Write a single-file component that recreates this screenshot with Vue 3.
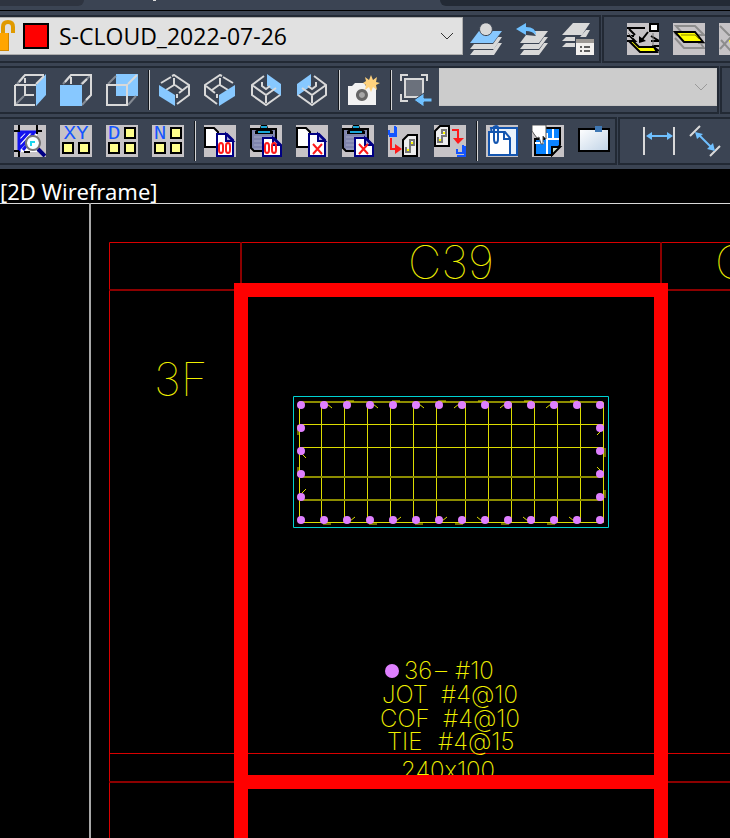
<script setup>
import { ref } from 'vue'

const layer = ref('S-CLOUD_2022-07-26')
const view = ref('')

const L = '#d9d9d9'
const B = '#87c8ff'
const D = '#858b94'
const K = '#000'
const W = '#fff'
const N = '#000084'
const R = '#ff1a1a'
const Y = '#ffff00'

// Shape helpers: filled outline and open stroke
const f = (d, fill, stroke = 'none', w = 1) => ({ d, fill, stroke, w })
const s = (d, stroke = L, w = 2) => ({ d, fill: 'none', stroke, w })

const tile = f('M0 0H32V32H0Z', '#c6c3c6')
const lowerLayers = [
  f('M28 14H32L24 26H0L4 21H23Z', L),
  f('M28 20H32L24 32H0L4 27H23Z', L)
]
const backPage = f('M1 3H10L14 7V22H1Z', W, K, 2)
const frontPage = [f('M13 9H23L29 15V31H13Z', W, N, 2), f('M22 9V16H29Z', '#a9a9d8', N, 2)]
const clipPage = [f('M13 13H24L31 20V31H13Z', W, N, 2), f('M23 13V20H30Z', '#a9a9d8', N, 2)]
const board = [
  f('M1 4H26V26H4L1 23Z', '#7f84ad', K, 2),
  s('M4 8H24M4 12H24M4 16H24M4 20H12M4 24H12', '#a3a7c6', 1),
  f('M5 6L10 3L11 0H17L18 3L23 6V9H5Z', K),
  f('M11 1H17V3H11ZM8 6H20V8H8Z', '#18a5d6')
]
const zeros = (x, y) => s(`M${x} ${y + 3}Q${x} ${y} ${x + 2} ${y}T${x + 4} ${y + 3}V${y + 7}Q${x + 4} ${y + 10} ${x + 2} ${y + 10}T${x} ${y + 7}ZM${x + 7} ${y + 3}Q${x + 7} ${y} ${x + 9} ${y}T${x + 11} ${y + 3}V${y + 7}Q${x + 11} ${y + 10} ${x + 9} ${y + 10}T${x + 7} ${y + 7}Z`, R)
const cross = (x, y) => s(`M${x} ${y}L${x + 9} ${y + 10}M${x + 9} ${y}L${x} ${y + 10}`, R)
const box = (x, y) => f(`M${x} ${y}H${x + 10}V${y + 10}H${x}Z`, '#ffff8c', K, 2)

const layerTools = [
  { name: 'Make object layer current', shapes: [f('M9 8H32L23 20H0Z', B), ...lowerLayers, f('M16 -.2A6.4 6.4 0 1 1 15.9 -.2Z', L, '#3b4453', 1)] },
  { name: 'Layer previous', shapes: [f('M16 8H32L23 20H4L10 12L20 13Z', L), f('M28 14H32L23 26H4L8 21H23Z', L), f('M28 20H32L23 32H4L8 27H23Z', L), f('M0 6L10 0V4Q20 4 20 12Q16 8 10 8V12Z', '#6fc0ff')] },
  { name: 'Layer states', shapes: [f('M11 0H28L20 12H0Z', L), f('M24 7H28L24 14H18ZM4 14H13V18H0ZM4 20H13V24H0Z', L), f('M14 16H32V32H14Z', '#f2f0ee'), f('M14 16H32V20H14Z', '#9c9894'), s('M18 24H20M22 24H28M18 28H20M22 28H28', '#5e5e5e')] }
]

const layerWalk = [
  { name: 'Layer match', shapes: [tile, s('M0 5H18M2 6L8 12M0 13H7M2 12L8 18H0M24 13L32 18M24 18H32M25 23H32M25 23L32 28', K), s('M1 10L6 15M26 10V29', '#777', 1), f('M2 18H6L12 24H27L30 29H13Z', Y, K, 2), s('M21 9L14 18', K), f('M12 20V13L19 18Z', K), f('M23 1H31V8H23Z', W, K, 2)] },
  { name: 'Change to current layer', shapes: [tile, s('M3 3H22L31 12H11ZM2 15L11 25H31L28 21', '#8d8d8d'), s('M1 9L4 13M25 20H32', '#8d8d8d'), f('M2 9H22L30 19H11Z', Y, K, 2), s('M8 12H22L26 16', '#8a8600', 1)] },
  { name: 'Copy to layer', shapes: [tile, s('M1 3L10 12H31M1 26L12 14M2 17L12 28H31', '#8d8d8d'), f('M10 17H32V25H12Z', Y)] }
]

const viewTools = [
  { name: 'Right view', shapes: [s('M3 10L10 2M2 30L10 22', D), f('M22 11L32 0V21L22 32Z', B), s('M5 8L11 1H30M1 11H22M1 11V31H21M11 4V9M11 12V21H20'), s('M22 10L30 2', L)] },
  { name: 'Front view', shapes: [s('M3 10L10 2M21 10L30 2M22 31L30 22', D), s('M5 8L11 1H31V21L26 26M11 3V10M22 10L27 5'), f('M0 11H22V32H0Z', B)] },
  { name: 'Back view', shapes: [f('M10 0H32V22H10Z', B), s('M2 10L10 2M22 31L30 22', D), s('M1 11H21V31H1ZM22 10L31 1')] },
  { sep: true },
  { name: 'SW isometric', shapes: [s('M3 9L13 3M14 2L16 1L31 11V21L19 30M21 19L30 12M16 4V11L8 16M17 11L24 16M19 20V24'), f('M1 11L17 21V32L1 22Z', B)] },
  { name: 'SE isometric', shapes: [s('M29 9L19 3M18 2L16 1L1 11V21L13 30M11 19L2 12M16 4V11L24 16M15 11L8 16M13 20V24'), f('M31 11L15 21V32L31 22Z', B)] },
  { name: 'NE isometric', shapes: [f('M17 0L31 10V22L17 12Z', B), s('M14 2L2 11V21L16 31L30 21M2 11L16 21L26 14M16 22V29M12 8V12L16 15L20 12')] },
  { name: 'NW isometric', shapes: [f('M15 0L1 10V22L15 12Z', B), s('M18 2L30 11V21L16 31L2 21M30 11L16 21L6 14M16 22V29M20 8V12L16 15L12 12')] },
  { sep: true },
  { name: 'Create camera', shapes: [f('M0 12H4L7 9H16L18 12H28V31H0Z', '#f2f2f2'), f('M14 15A6 6 0 1 1 13.9 15Z', '#666'), f('M14 18A3 3 0 1 1 13.9 18Z', '#a6a6a6'), f('M23 1L25 6L29 3L28 8L32 9L28 11L29 16L25 13L23 18L21 13L17 16L18 11L15 9L18 7L17 3L21 6Z', '#ffd27d')] },
  { sep: true },
  { name: 'Named view', shapes: [s('M1 7V1H8M21 1H27V7M1 20V27H8'), f('M5 5H23V23H5Z', '#6b717c', L, 2), f('M14 26L24 19V24H32V28H24V33Z', '#6fc0ff', '#3b4453', 1)] }
]

const editTools = [
  { name: 'Zoom window', shapes: [tile, f('M4 6H23V27H4Z', W), s('M5 12L10 7M5 18L15 7M5 24L20 8M9 25L13 20M5 7H22M5 7V27', '#1212ee', 3), s('M5 0V5M23 0V9M0 6H6M22 6H28M0 26H5M5 26V32M10 27H16', K), f('M19 11A7 7 0 1 1 18.9 11Z', '#f6ffff', '#777', 2), s('M17 21V17H21', '#19d6ee'), s('M24 24L31 31', N, 4)] },
  { name: 'Filter by coordinates', glyph: 'XY', shapes: [tile, box(3, 18), box(19, 18)] },
  { name: 'Filter by diameter', glyph: 'D', shapes: [tile, box(19, 3), box(3, 18), box(19, 18)] },
  { name: 'Filter by number', glyph: 'N', shapes: [tile, box(19, 3), box(3, 18), box(19, 18)] },
  { sep: true },
  { name: 'Copy with base point', shapes: [tile, backPage, ...frontPage, zeros(15, 18)] },
  { name: 'Paste to origin', shapes: [tile, ...board, ...clipPage, zeros(15, 18)] },
  { name: 'Copy at point', shapes: [tile, backPage, ...frontPage, cross(17, 19)] },
  { name: 'Paste at point', shapes: [tile, ...board, ...clipPage, cross(17, 19)] },
  { name: 'Block to drawing', shapes: [tile, s('M7 1V9H1V5M1 11H8V2', '#1455ff'), s('M3 13V24H9', R), f('M7 19L14 24L7 29Z', R), f('M15 15L20 10H29V31H15Z', '#eee', K, 2), s('M22 19V15H26V20H22V27H18V22', '#777'), s('M24 17V19M20 24V26', Y)] },
  { name: 'Drawing to block', shapes: [tile, f('M1 6L6 1H15V21H1Z', '#eee', K, 2), s('M8 9V5H12V11H8V17H4V12', '#777'), s('M10 7V9M6 14V16', Y), s('M18 5H24V13', R), f('M19 13H30L24 19Z', R), s('M29 20V28H23V24M23 31H31V21', '#1455ff')] },
  { sep: true },
  { name: 'Attach file', shapes: [tile, f('M5 3H31V30H10Z', '#e9f2fb', '#1456b0', 2), f('M3 7H19L24 13V30H3Z', W, '#1456b0', 2), s('M18 8V14H24M8 4V14Q8 18 10 18T12 14V3Q12 1 10 1T7 3', '#1456b0')] },
  { name: 'Pick drawing', shapes: [tile, f('M3 14H12V3H28V20L20 30H3Z', '#0a84ff', K, 2), s('M15 8V29M3 18H12M16 14H27M21 4V13', W), f('M20 30V22H28Z', '#c8dfc8', K, 2), f('M0 0H14V14L11 11V19H9L7 12L5 13L2 9L0 6Z', W, '#555', 1)] },
  { name: 'Viewport window', window: true, shapes: [f('M17 1H24V7H17Z', '#3f78b4')] }
]

const dimTools = [
  { name: 'Linear dimension', shapes: [s('M1 2V30M31 2V30'), s('M6 11H27', '#6fc0ff'), f('M3 11L9 7V15ZM30 11L24 7V15Z', '#6fc0ff')] },
  { name: 'Aligned dimension', shapes: [s('M1 11L11 1M21 31L31 21'), s('M9 9L24 24', '#6fc0ff'), f('M6 7L14 9L8 14ZM26 26L18 24L24 18Z', '#6fc0ff')] }
]

const columns = Array.from({ length: 14 }, (_, i) => 301 + i * 23)
const sideRows = [428, 451, 474, 497]
const bars = [
  ...columns.flatMap(x => [[x, 405], [x, 520]]),
  ...sideRows.flatMap(y => [[301, y], [600, y]])
]
const verticals = [321, 344, 367, 390, 413, 436, 465, 488, 511, 534, 557, 580]

// Bent and straight hooks alternate along each face, mirrored about the centre
const hooks = columns.slice(1, 13).map((x, i) => {
  const dir = i < 6 ? 1 : -1
  const bent = y => `M${x + 3 * dir} ${y}l${5 * dir} ${y < 450 ? 4 : -4}`
  const flat = y => `M${x - dir} ${y}h${8 * dir}`
  return i % 2 === 0 ? bent(404) + flat(524) : flat(401) + bent(521)
}).join('') + 'M298 425v10M302 454l4 4M298 467v9M302 493l4 -4M601 431l-4 4M605 448v9M601 471l-4 -4M605 490v8'

const rows = [
  { key: 'layers', list: layerTools, extra: layerWalk },
  { key: 'views', list: viewTools, extra: [] },
  { key: 'edit', list: editTools, extra: dimTools }
]
</script>

<template>
  <main class="app">
    <header class="chrome">
      <div class="tabs"><i class="tab"></i><i class="speck"></i><i class="tab wide"></i></div>
      <div v-for="row in rows" :key="row.key" class="row" :class="row.key">
        <div class="group first" role="toolbar" :aria-label="row.key">
          <div v-if="row.key === 'layers'" class="combo">
            <svg class="lock" viewBox="0 0 16 32" aria-hidden="true">
              <path d="M3 13V7Q3 2 8 2T13 7V13" fill="none" stroke="#e09a00" stroke-width="4" />
              <path d="M0 13H9V31H0Z" fill="#ffa500" /><path d="M8 13H9V31H0V30H8Z" fill="#d08700" />
            </svg>
            <i class="swatch"></i>
            <select v-model="layer" aria-label="Layer"><option>S-CLOUD_2022-07-26</option></select>
            <svg class="chevron" viewBox="0 0 14 8" aria-hidden="true"><path d="M1 1L7 7L13 1" /></svg>
          </div>
          <template v-for="(t, i) in row.list" :key="i">
            <i v-if="t.sep" class="sep"></i>
            <button v-else type="button" :aria-label="t.name">
              <svg viewBox="0 0 32 32" aria-hidden="true">
                <template v-if="t.window">
                  <defs>
                    <linearGradient id="pane" x2="1" y2="1"><stop stop-color="#fff" /><stop offset="1" stop-color="#bfd2e6" /></linearGradient>
                  </defs>
                  <path d="M1 4H31V26H1Z" fill="url(#pane)" stroke="#000" stroke-width="2" />
                </template>
                <path v-for="(p, j) in t.shapes" :key="j" :d="p.d" :fill="p.fill" :stroke="p.stroke" :stroke-width="p.w" />
                <text v-if="t.glyph" class="glyph" :x="t.glyph === 'XY' ? 16 : 8" y="14">{{ t.glyph }}</text>
              </svg>
            </button>
          </template>
          <div v-if="row.key === 'views'" class="combo blank">
            <select v-model="view" disabled aria-label="Saved view"><option value=""></option></select>
            <svg class="chevron" viewBox="0 0 14 8" aria-hidden="true"><path d="M1 1L7 7L13 1" /></svg>
          </div>
        </div>
        <div class="group last">
          <button v-for="t in row.extra" :key="t.name" type="button" :aria-label="t.name">
            <svg viewBox="0 0 32 32" aria-hidden="true">
              <path v-for="(p, j) in t.shapes" :key="j" :d="p.d" :fill="p.fill" :stroke="p.stroke" :stroke-width="p.w" />
            </svg>
          </button>
        </div>
      </div>
    </header>

    <button type="button" class="style">[2D Wireframe]</button>

    <svg class="sheet" viewBox="0 203 730 635" role="img" aria-label="Column schedule">
      <path class="edge" d="M0 203.5H730" />
      <path class="edge side" d="M90 203V838" />
      <path class="grid" d="M109.5 838V242.5H730M109 753.5H730" />
      <path class="grid dim" d="M241 242V290M661 242V290M109 290H730M109 782H730" />

      <text class="cad big" x="408" y="279">C39</text>
      <text class="cad big" x="715" y="279">C</text>
      <text class="cad big" x="154" y="396">3F</text>

      <path class="cover" d="M293.5 396.5H608.5V527.5H293.5Z" />
      <path class="tie" d="M299.5 402.5H603.5V522.5H299.5ZM299 424.5H603M299 447.5H603" />
      <path class="tie" :d="verticals.map(x => `M${x}.5 402V522`).join('')" />
      <path class="tie dull" d="M299 402H603M299 477H603M299 500H603" />
      <path class="tie" :d="hooks" />
      <circle v-for="([x, y], i) in bars" :key="i" class="bar" :cx="x" :cy="y" r="4" />

      <circle class="bar" cx="392" cy="671" r="7" />
      <text class="cad" x="404" y="679">36</text>
      <text class="cad" x="435" y="679">–</text>
      <text class="cad" x="455" y="679">#10</text>
      <text class="cad" x="382" y="703">JOT</text>
      <text class="cad" x="441" y="703">#4@10</text>
      <text class="cad" x="380" y="727">COF</text>
      <text class="cad" x="443" y="727">#4@10</text>
      <text class="cad" x="387" y="750">TIE</text>
      <text class="cad" x="438" y="750">#4@15</text>
      <text class="cad" x="401" y="779">240x100</text>

      <path class="mark" d="M241 838V290H661V838M241 782H661" />
    </svg>
  </main>
</template>

<style>
body {
  background: #000;
}
</style>

<style scoped>
.app {
  background: #000;
  font-family: "Noto Sans", sans-serif;
}
.chrome {
  background: #3b4453;
  display: grid;
  gap: 3px;
  padding-bottom: 4px;
}
.tabs {
  height: 10px;
  margin-bottom: 1px;
  border-bottom: 1px solid #000;
  display: flex;
  align-items: flex-start;
}
.tab {
  flex: 0 0 84px;
  height: 6px;
  background: #2e3440;
  border-radius: 0 0 12px 0;
}
.speck {
  width: 3px;
  height: 1px;
  margin-left: 69px;
  background: #ddd;
}
.tab.wide {
  flex: 1;
  margin-left: 284px;
  background: #232a35;
  border-radius: 0 0 0 12px;
}
.row {
  display: grid;
  gap: 1px;
}
.layers { grid-template-columns: minmax(0, 1fr) 128px; }
.views { grid-template-columns: minmax(0, 1fr) 10px; }
.edit { grid-template-columns: minmax(0, 1fr) 112px; }
.group {
  height: 44px;
  border: 2px solid #222934;
  display: flex;
  align-items: center;
  gap: 14px;
  overflow: hidden;
}
.first {
  border-left: 0;
  padding-left: 14px;
}
.layers .first {
  padding: 0 5px 0 0;
}
.last {
  border-right: 0;
  padding-left: 23px;
}
.views .last {
  padding-left: 0;
}
button {
  flex: none;
  width: 32px;
  height: 32px;
  padding: 0;
  border: 0;
  background: none;
}
button svg {
  display: block;
  width: 32px;
  height: 32px;
}
.glyph {
  font: 21px "Liberation Mono", monospace;
  fill: #1455ff;
  text-anchor: middle;
}
.sep {
  flex: none;
  width: 1px;
  height: 40px;
  margin: 0 -6px 0 -4px;
  border-left: 1px solid #12161c;
  background: #d5d5d5;
}
.combo {
  flex: 1;
  min-width: 0;
  height: 38px;
  box-sizing: border-box;
  align-self: flex-start;
  display: flex;
  align-items: center;
  background: #e1e1e1;
  border: 1px solid #adadad;
  border-left: 0;
  margin-right: -7px;
  padding-right: 8px;
}
.lock {
  width: 16px;
  height: 32px;
  margin-right: 7px;
}
.swatch {
  width: 22px;
  height: 22px;
  border: 2px solid #000;
  background: #f00;
}
select {
  flex: 1;
  min-width: 0;
  height: 36px;
  padding: 0 0 0 10px;
  border: 0;
  background: none;
  appearance: none;
  color: #000;
  font: 23px "Open Sans", "Noto Sans", sans-serif;
}
.chevron {
  width: 14px;
  height: 8px;
  fill: none;
  stroke: #333;
}
.blank {
  background: #ccc;
  margin: 0 0 0 -7px;
  border-color: #c4c4c4;
}
.blank .chevron {
  stroke: #999;
}
.style {
  display: block;
  width: auto;
  height: 34px;
  padding-top: 9px;
  color: #fff;
  font: 22px/22px "Noto Sans", sans-serif;
}
.sheet {
  display: block;
  width: 100%;
  height: auto;
}
.sheet path {
  fill: none;
}
.edge { stroke: #d8d8d8; }
.side { stroke: #a8a8a8; stroke-width: 2; }
.grid { stroke: #d80000; }
.dim { stroke: #8c0000; stroke-width: 2; }
.cover { stroke: #00d2d2; }
.tie { stroke: #dcdc00; }
.dull { stroke: #8c8c00; stroke-width: 2; }
.bar { fill: #df80ff; }
.sheet .mark { stroke: #f00; stroke-width: 14; }
.cad {
  font-family: Inter, sans-serif;
  font-weight: 200;
  font-size: 24px;
  font-feature-settings: "calt" 0;
  fill: #f0f000;
}
.big {
  font-weight: 100;
  font-size: 46px;
}
</style>
